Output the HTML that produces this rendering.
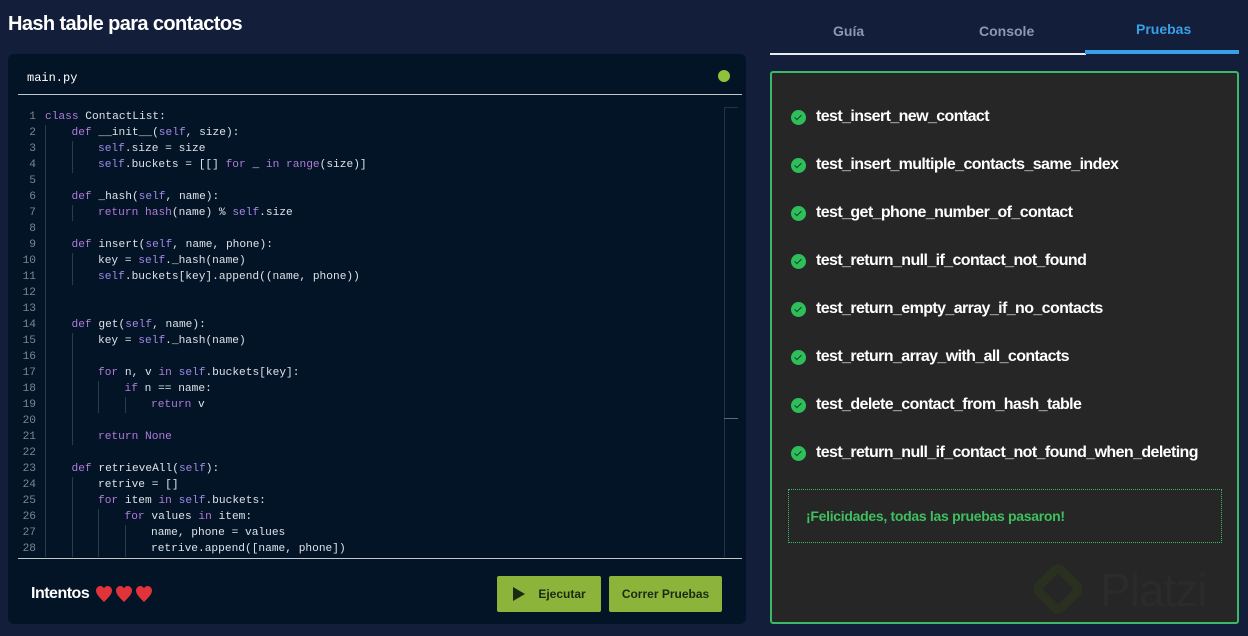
<!DOCTYPE html>
<html><head><meta charset="utf-8"><style>
*{margin:0;padding:0;box-sizing:border-box}
body{width:1248px;height:636px;background:#121e3a;font-family:"Liberation Sans",sans-serif;position:relative;overflow:hidden}
h1{position:absolute;left:8px;top:13px;font-size:20px;font-weight:bold;color:#fff;letter-spacing:-0.6px}
.ed{position:absolute;left:8px;top:54px;width:738px;height:570px;background:#031426;border-radius:6px}
.fname{position:absolute;left:19px;top:17px;color:#fff;font:12px "Liberation Mono",monospace}
.dot{position:absolute;left:710px;top:16px;width:12px;height:12px;border-radius:50%;background:#8fc23a}
.hl{position:absolute;left:10px;width:724px;height:1px;background:#c0c6cc}
.code{position:absolute;left:0;top:55px;font:11.2px/16px "Liberation Mono",monospace;color:#dde2e8;white-space:pre}
.ln{display:inline-block;width:28px;text-align:right;color:#7d8590;margin-right:9px}
.i{display:inline-block;width:26.5px;height:16px;vertical-align:top;border-left:1px solid #2a3a50}
.k{color:#b07ad8}.s{color:#a087e6}
.sb{position:absolute;left:716px;top:53px;width:1px;height:450px;background:#25324a}
.sb2{position:absolute;left:716px;top:53px;width:14px;height:1px;background:#25324a}
.mk{position:absolute;left:716px;top:364px;width:14px;height:1px;background:#5a6b80}
.int{position:absolute;left:23px;top:531px;color:#fff;font-size:16px;font-weight:bold;letter-spacing:-0.5px;display:flex;align-items:center}
.int svg{margin-left:3px}
.btn{position:absolute;top:522px;height:36px;background:#8cb43a;border-radius:2px;color:#1b2a12;font-size:12px;font-weight:bold;display:flex;align-items:center;justify-content:center}
.tab{position:absolute;top:23px;font-size:14px;font-weight:bold;color:#8a9ab3}
.tl{position:absolute;left:770px;top:53px;width:316px;height:2px;background:#e8ecef}
.ta{position:absolute;left:1085px;top:50px;width:154px;height:4px;background:#3aa0e6}
.panel{position:absolute;left:770px;top:71px;width:469px;height:553px;background:#262627;border:2px solid #3db865;border-radius:3px;overflow:hidden}
.t{position:absolute;left:19px;display:flex;align-items:center;color:#fff;font-size:16px;font-weight:bold;letter-spacing:-0.6px}
.ck{width:15px;height:15px;border-radius:50%;background:#2fbf5a;margin-right:10px;position:relative}
.ck:after{content:"";position:absolute;left:5px;top:3px;width:3px;height:6px;border:solid #143;border-width:0 1.5px 1.5px 0;transform:rotate(45deg)}
.fel{position:absolute;left:16px;top:416px;width:434px;height:54px;border:1px dotted #3db865;color:#3fbf5e;font-size:14px;font-weight:bold;padding:18px 0 0 17px;letter-spacing:-0.3px}
.wm{position:absolute;left:328px;top:490px;font-size:46px;color:#2b2b2c;letter-spacing:-1px}
.wl{position:absolute;left:266px;top:496px;width:40px;height:40px;border:9px solid #29301f;border-radius:9px;transform:rotate(45deg)}
</style></head><body>
<h1>Hash table para contactos</h1>
<div class="ed">
<div class="fname">main.py</div><div class="dot"></div>
<div class="hl" style="top:40px"></div>
<div class="code"><span class="ln">1</span><span class="k">class</span> ContactList:
<span class="ln">2</span><span class="i"></span><span class="k">def</span> __init__(<span class="s">self</span>, size):
<span class="ln">3</span><span class="i"></span><span class="i"></span><span class="s">self</span>.size = size
<span class="ln">4</span><span class="i"></span><span class="i"></span><span class="s">self</span>.buckets = [[] <span class="k">for</span> _ <span class="k">in</span> <span class="k">range</span>(size)]
<span class="ln">5</span><span class="i"></span>
<span class="ln">6</span><span class="i"></span><span class="k">def</span> _hash(<span class="s">self</span>, name):
<span class="ln">7</span><span class="i"></span><span class="i"></span><span class="k">return</span> <span class="k">hash</span>(name) % <span class="s">self</span>.size
<span class="ln">8</span><span class="i"></span>
<span class="ln">9</span><span class="i"></span><span class="k">def</span> insert(<span class="s">self</span>, name, phone):
<span class="ln">10</span><span class="i"></span><span class="i"></span>key = <span class="s">self</span>._hash(name)
<span class="ln">11</span><span class="i"></span><span class="i"></span><span class="s">self</span>.buckets[key].append((name, phone))
<span class="ln">12</span><span class="i"></span>
<span class="ln">13</span><span class="i"></span>
<span class="ln">14</span><span class="i"></span><span class="k">def</span> get(<span class="s">self</span>, name):
<span class="ln">15</span><span class="i"></span><span class="i"></span>key = <span class="s">self</span>._hash(name)
<span class="ln">16</span><span class="i"></span><span class="i"></span>
<span class="ln">17</span><span class="i"></span><span class="i"></span><span class="k">for</span> n, v <span class="k">in</span> <span class="s">self</span>.buckets[key]:
<span class="ln">18</span><span class="i"></span><span class="i"></span><span class="i"></span><span class="k">if</span> n == name:
<span class="ln">19</span><span class="i"></span><span class="i"></span><span class="i"></span><span class="i"></span><span class="k">return</span> v
<span class="ln">20</span><span class="i"></span><span class="i"></span>
<span class="ln">21</span><span class="i"></span><span class="i"></span><span class="k">return</span> <span class="k">None</span>
<span class="ln">22</span><span class="i"></span>
<span class="ln">23</span><span class="i"></span><span class="k">def</span> retrieveAll(<span class="s">self</span>):
<span class="ln">24</span><span class="i"></span><span class="i"></span>retrive = []
<span class="ln">25</span><span class="i"></span><span class="i"></span><span class="k">for</span> item <span class="k">in</span> <span class="s">self</span>.buckets:
<span class="ln">26</span><span class="i"></span><span class="i"></span><span class="i"></span><span class="k">for</span> values <span class="k">in</span> item:
<span class="ln">27</span><span class="i"></span><span class="i"></span><span class="i"></span><span class="i"></span>name, phone = values
<span class="ln">28</span><span class="i"></span><span class="i"></span><span class="i"></span><span class="i"></span>retrive.append([name, phone])</div>
<div class="sb"></div><div class="sb2"></div><div class="mk"></div>
<div class="hl" style="top:504px"></div>
<div class="int">Intentos&nbsp;<svg width="58" height="17" viewBox="0 0 58 17"><g fill="#e0333a"><path id="h" d="M8 16C3 11 0 8 0 4.5 0 2 2 0 4.3 0 6 0 7.3 1 8 2.3 8.7 1 10 0 11.7 0 14 0 16 2 16 4.5 16 8 13 11 8 16Z"/><use href="#h" x="20"/><use href="#h" x="40"/></g></svg></div>
<div class="btn" style="left:489px;width:104px"><svg width="14" height="16" viewBox="0 0 14 16" style="margin-right:12px"><path d="M1 1L13 8L1 15Z" fill="#1b2a12"/></svg>Ejecutar</div>
<div class="btn" style="left:601px;width:113px">Correr Pruebas</div>
</div>
<div class="tab" style="left:833px">Guía</div>
<div class="tab" style="left:979px">Console</div>
<div class="tab" style="left:1136px;top:21px;color:#3aa0e6">Pruebas</div>
<div class="tl"></div><div class="ta"></div>
<div class="panel">
<div class="t" style="top:35px"><div class="ck"></div>test_insert_new_contact</div>
<div class="t" style="top:83px"><div class="ck"></div>test_insert_multiple_contacts_same_index</div>
<div class="t" style="top:131px"><div class="ck"></div>test_get_phone_number_of_contact</div>
<div class="t" style="top:179px"><div class="ck"></div>test_return_null_if_contact_not_found</div>
<div class="t" style="top:227px"><div class="ck"></div>test_return_empty_array_if_no_contacts</div>
<div class="t" style="top:275px"><div class="ck"></div>test_return_array_with_all_contacts</div>
<div class="t" style="top:323px"><div class="ck"></div>test_delete_contact_from_hash_table</div>
<div class="t" style="top:371px"><div class="ck"></div>test_return_null_if_contact_not_found_when_deleting</div>
<div class="fel">¡Felicidades, todas las pruebas pasaron!</div>
<div class="wl"></div>
<div class="wm">Platzi</div>
</div>
</body></html>
